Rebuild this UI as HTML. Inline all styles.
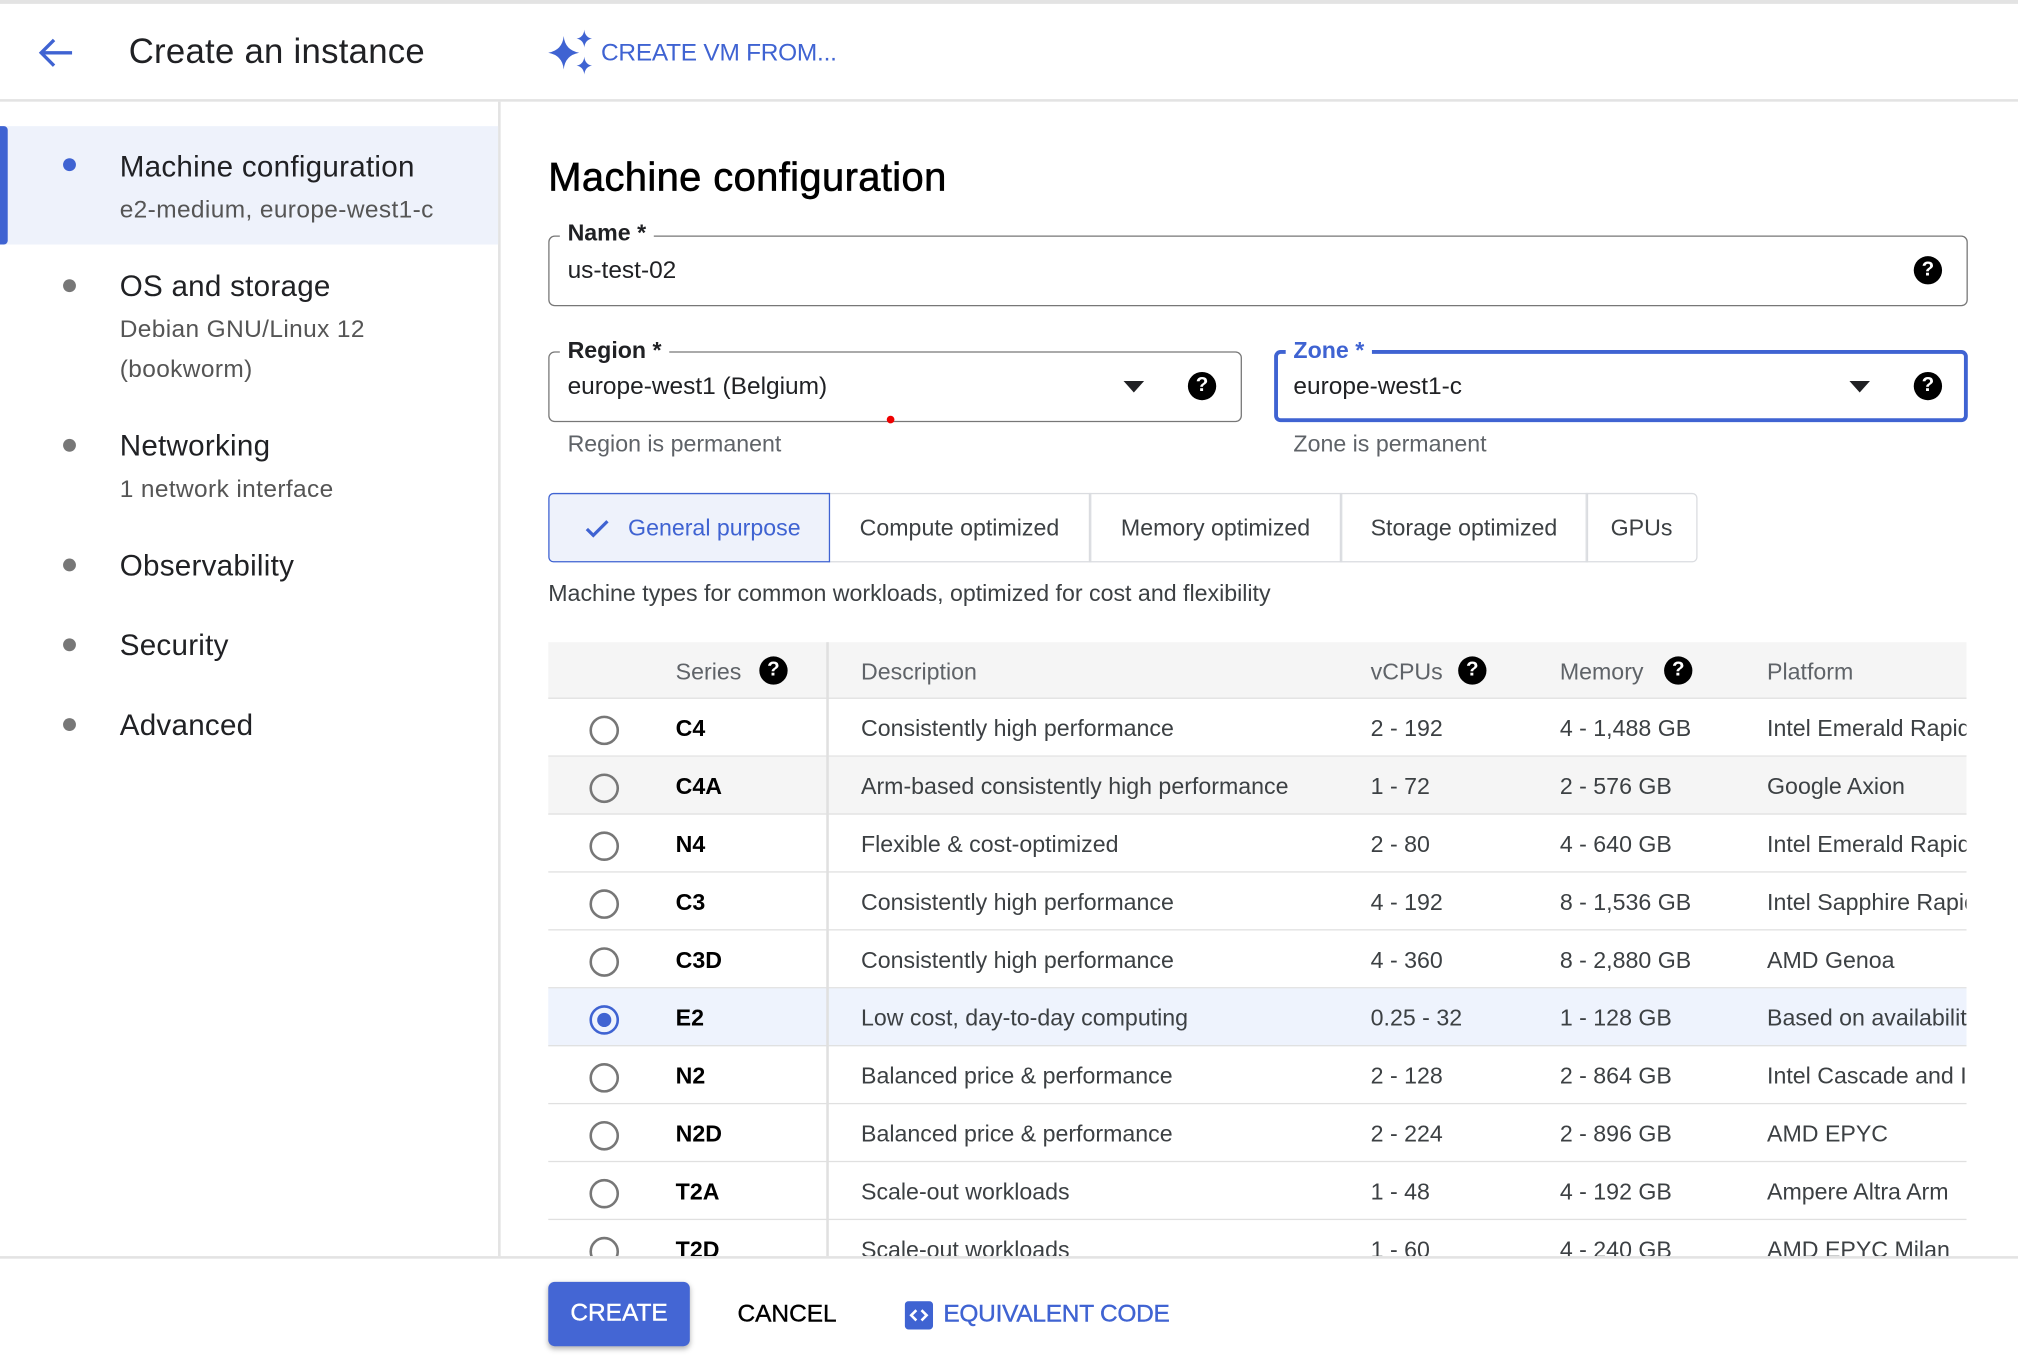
<!DOCTYPE html>
<html><head><meta charset="utf-8"><style>
*{box-sizing:border-box;margin:0;padding:0}
html,body{width:2018px;height:1364px;overflow:hidden;background:#fff}
#w{position:absolute;left:0;top:0;width:1568px;height:1060px;transform:scale(1.28699);transform-origin:0 0;font-family:"Liberation Sans",sans-serif;color:#202124}
.a{position:absolute;white-space:nowrap}
.help{position:absolute;width:22px;height:22px;border-radius:50%;background:#000;color:#fff;font-weight:bold;font-size:16px;text-align:center;line-height:22px}
.tri{position:absolute;width:0;height:0;border-left:8px solid transparent;border-right:8px solid transparent;border-top:9px solid #202124}
.row{position:absolute;left:426px;width:1102px;height:45px;border-bottom:1.5px solid #e0e0e0;font-size:18px;color:#3c4043}
.row .a{top:13px}
.rad{position:absolute;left:458px;width:23px;height:23px;border-radius:50%;border:2.5px solid #777}
.tab{position:absolute;top:383px;height:54px;border:1.5px solid #dadce0;font-size:18px;color:#3c4043;line-height:52px;text-align:center}
</style></head><body><div id="w">
<div class="a" style="left:0;top:0;width:1568px;height:3px;background:#e3e3e3"></div>
<svg class="a" style="left:28px;top:28px" width="30" height="26" viewBox="0 0 30 26"><path d="M28 13H4M14 3L4 13l10 10" stroke="#3f63d2" stroke-width="2.6" fill="none"/></svg>
<div class="a" style="left:100px;top:25px;font-size:27px;color:#202124;letter-spacing:0.2px">Create an instance</div>
<svg class="a" style="left:424px;top:22px" width="40" height="38" viewBox="0 0 40 38"><path d="M14 6Q15 17 26 19Q15 21 14 32Q13 21 2 19Q13 17 14 6Z" fill="#3f63d2"/><path d="M30 1Q30.5 7 36 8Q30.5 9 30 15Q29.5 9 24 8Q29.5 7 30 1Z" fill="#3f63d2"/><path d="M30 22Q30.5 28 36 29Q30.5 30 30 36Q29.5 30 24 29Q29.5 28 30 22Z" fill="#3f63d2"/></svg>
<div class="a" style="left:467px;top:31px;font-size:19px;color:#3f63d2;letter-spacing:-0.2px">CREATE VM FROM...</div>
<div class="a" style="left:0;top:77px;width:1568px;height:2px;background:#e3e3e3"></div>
<div class="a" style="left:387px;top:79px;width:1.5px;height:900px;background:#e3e3e3"></div>
<div class="a" style="left:0;top:98px;width:387px;height:92px;background:#eef2fb"></div>
<div class="a" style="left:0;top:98px;width:6px;height:92px;background:#3f63d2;border-radius:0 3px 3px 0"></div>
<div class="a" style="left:49px;top:123px;width:10px;height:10px;border-radius:50%;background:#3f63d2"></div>
<div class="a" style="left:93px;top:116px;font-size:23px;letter-spacing:0.2px">Machine configuration</div>
<div class="a" style="left:93px;top:153px;font-size:19px;color:#555;letter-spacing:0.3px">e2-medium, europe-west1-c</div>
<div class="a" style="left:49px;top:217px;width:10px;height:10px;border-radius:50%;background:#777"></div>
<div class="a" style="left:93px;top:209px;font-size:23px;letter-spacing:0.2px">OS and storage</div>
<div class="a" style="left:93px;top:241px;font-size:19px;color:#555;line-height:31px;white-space:normal;width:220px;letter-spacing:0.3px">Debian GNU/Linux 12 (bookworm)</div>
<div class="a" style="left:49px;top:341px;width:10px;height:10px;border-radius:50%;background:#777"></div>
<div class="a" style="left:93px;top:333px;font-size:23px;letter-spacing:0.2px">Networking</div>
<div class="a" style="left:93px;top:370px;font-size:19px;color:#555;letter-spacing:0.3px">1 network interface</div>
<div class="a" style="left:49px;top:434px;width:10px;height:10px;border-radius:50%;background:#777"></div>
<div class="a" style="left:93px;top:426px;font-size:23px;letter-spacing:0.2px">Observability</div>
<div class="a" style="left:49px;top:496px;width:10px;height:10px;border-radius:50%;background:#777"></div>
<div class="a" style="left:93px;top:488px;font-size:23px;letter-spacing:0.2px">Security</div>
<div class="a" style="left:49px;top:558px;width:10px;height:10px;border-radius:50%;background:#777"></div>
<div class="a" style="left:93px;top:550px;font-size:23px;letter-spacing:0.2px">Advanced</div>

<div class="a" style="left:426px;top:120px;font-size:31px;color:#000;letter-spacing:0.3px;-webkit-text-stroke:0.5px #000">Machine configuration</div>
<div class="a" style="left:426px;top:183px;width:1103px;height:55px;border:1.5px solid #777;border-radius:5px"></div>
<div class="a" style="left:435px;top:171px;background:#fff;padding:0 6px;font-size:18px;font-weight:bold">Name *</div>
<div class="a" style="left:441px;top:200px;font-size:19px">us-test-02</div>
<div class="help" style="left:1487px;top:199px">?</div>
<div class="a" style="left:426px;top:273px;width:539px;height:55px;border:1.5px solid #777;border-radius:5px"></div>
<div class="a" style="left:435px;top:262px;background:#fff;padding:0 6px;font-size:18px;font-weight:bold">Region *</div>
<div class="a" style="left:441px;top:290px;font-size:19px">europe-west1 (Belgium)</div>
<div class="tri" style="left:873px;top:296px"></div>
<div class="help" style="left:923px;top:289px">?</div>
<div class="a" style="left:689px;top:323px;width:6px;height:6px;border-radius:50%;background:#e00"></div>
<div class="a" style="left:441px;top:335px;font-size:18px;color:#5f6368">Region is permanent</div>
<div class="a" style="left:990px;top:272px;width:539px;height:56px;border:3px solid #3f63d2;border-radius:5px"></div>
<div class="a" style="left:999px;top:262px;background:#fff;padding:0 6px;font-size:18px;font-weight:bold;color:#3f63d2">Zone *</div>
<div class="a" style="left:1005px;top:290px;font-size:19px">europe-west1-c</div>
<div class="tri" style="left:1437px;top:296px"></div>
<div class="help" style="left:1487px;top:289px">?</div>
<div class="a" style="left:1005px;top:335px;font-size:18px;color:#5f6368">Zone is permanent</div>

<div class="tab" style="left:643px;width:205px">Compute optimized</div>
<div class="tab" style="left:846px;width:197px">Memory optimized</div>
<div class="tab" style="left:1041px;width:193px">Storage optimized</div>
<div class="tab" style="left:1232px;width:87px;border-radius:0 4px 4px 0">GPUs</div>
<div class="tab" style="left:426px;width:219px;border:1.5px solid #3f63d2;background:#eef2fb;color:#3f63d2;border-radius:4px 0 0 4px;padding-left:61px;text-align:left">General purpose</div>
<svg class="a" style="left:454px;top:402px" width="20" height="18" viewBox="0 0 20 18"><path d="M2 9l5 5L18 3" stroke="#3f63d2" stroke-width="2.5" fill="none"/></svg>
<div class="a" style="left:426px;top:451px;font-size:18px;color:#3c4043">Machine types for common workloads, optimized for cost and flexibility</div>

<div class="row" style="top:499px;height:44px;background:#f5f5f5;color:#5f6368">
<div class="a" style="left:99px">Series</div><div class="help" style="left:164px;top:11px">?</div>
<div class="a" style="left:243px">Description</div>
<div class="a" style="left:639px">vCPUs</div><div class="help" style="left:707px;top:11px">?</div>
<div class="a" style="left:786px">Memory</div><div class="help" style="left:867px;top:11px">?</div>
<div class="a" style="left:947px">Platform</div></div>
<div class="a" style="left:642px;top:499px;width:1.5px;height:480px;background:#e0e0e0;z-index:2"></div>

<div class="row" style="top:543px"><div class="a" style="left:99px;color:#000;font-weight:bold">C4</div><div class="a" style="left:243px">Consistently high performance</div><div class="a" style="left:639px">2 - 192</div><div class="a" style="left:786px">4 - 1,488 GB</div><div class="a" style="left:947px;width:155px;overflow:hidden">Intel Emerald Rapids</div></div>
<div class="row" style="top:588px;background:#f5f5f5"><div class="a" style="left:99px;color:#000;font-weight:bold">C4A</div><div class="a" style="left:243px">Arm-based consistently high performance</div><div class="a" style="left:639px">1 - 72</div><div class="a" style="left:786px">2 - 576 GB</div><div class="a" style="left:947px">Google Axion</div></div>
<div class="row" style="top:633px"><div class="a" style="left:99px;color:#000;font-weight:bold">N4</div><div class="a" style="left:243px">Flexible &amp; cost-optimized</div><div class="a" style="left:639px">2 - 80</div><div class="a" style="left:786px">4 - 640 GB</div><div class="a" style="left:947px;width:155px;overflow:hidden">Intel Emerald Rapids</div></div>
<div class="row" style="top:678px"><div class="a" style="left:99px;color:#000;font-weight:bold">C3</div><div class="a" style="left:243px">Consistently high performance</div><div class="a" style="left:639px">4 - 192</div><div class="a" style="left:786px">8 - 1,536 GB</div><div class="a" style="left:947px;width:155px;overflow:hidden">Intel Sapphire Rapids</div></div>
<div class="row" style="top:723px"><div class="a" style="left:99px;color:#000;font-weight:bold">C3D</div><div class="a" style="left:243px">Consistently high performance</div><div class="a" style="left:639px">4 - 360</div><div class="a" style="left:786px">8 - 2,880 GB</div><div class="a" style="left:947px">AMD Genoa</div></div>
<div class="row" style="top:768px;background:#eef3fd"><div class="a" style="left:99px;color:#000;font-weight:bold">E2</div><div class="a" style="left:243px">Low cost, day-to-day computing</div><div class="a" style="left:639px">0.25 - 32</div><div class="a" style="left:786px">1 - 128 GB</div><div class="a" style="left:947px;width:155px;overflow:hidden">Based on availability</div></div>
<div class="row" style="top:813px"><div class="a" style="left:99px;color:#000;font-weight:bold">N2</div><div class="a" style="left:243px">Balanced price &amp; performance</div><div class="a" style="left:639px">2 - 128</div><div class="a" style="left:786px">2 - 864 GB</div><div class="a" style="left:947px;width:155px;overflow:hidden">Intel Cascade and Ice Lake</div></div>
<div class="row" style="top:858px"><div class="a" style="left:99px;color:#000;font-weight:bold">N2D</div><div class="a" style="left:243px">Balanced price &amp; performance</div><div class="a" style="left:639px">2 - 224</div><div class="a" style="left:786px">2 - 896 GB</div><div class="a" style="left:947px">AMD EPYC</div></div>
<div class="row" style="top:903px"><div class="a" style="left:99px;color:#000;font-weight:bold">T2A</div><div class="a" style="left:243px">Scale-out workloads</div><div class="a" style="left:639px">1 - 48</div><div class="a" style="left:786px">4 - 192 GB</div><div class="a" style="left:947px">Ampere Altra Arm</div></div>
<div class="row" style="top:948px"><div class="a" style="left:99px;color:#000;font-weight:bold">T2D</div><div class="a" style="left:243px">Scale-out workloads</div><div class="a" style="left:639px">1 - 60</div><div class="a" style="left:786px">4 - 240 GB</div><div class="a" style="left:947px">AMD EPYC Milan</div></div>
<div class="rad" style="top:556px"></div><div class="rad" style="top:601px"></div><div class="rad" style="top:646px"></div><div class="rad" style="top:691px"></div><div class="rad" style="top:736px"></div>
<div class="rad" style="top:781px;border-color:#3f63d2"><div style="position:absolute;left:3.5px;top:3.5px;width:11px;height:11px;border-radius:50%;background:#3f63d2"></div></div>
<div class="rad" style="top:826px"></div><div class="rad" style="top:871px"></div><div class="rad" style="top:916px"></div><div class="rad" style="top:961px"></div>

<div class="a" style="left:0;top:976px;width:1568px;height:84px;background:#fff;border-top:2px solid #e3e3e3;z-index:3">
<div class="a" style="left:426px;top:18px;width:110px;height:50px;background:#4466d4;border-radius:5px;box-shadow:0 2px 4px rgba(0,0,0,.3);color:#fff;font-size:19px;text-align:center;line-height:50px;-webkit-text-stroke:0.3px #fff">CREATE</div>
<div class="a" style="left:573px;top:33px;font-size:19px;color:#000;-webkit-text-stroke:0.3px #000">CANCEL</div>
<svg class="a" style="left:703px;top:33px" width="22" height="22" viewBox="0 0 22 22"><rect width="22" height="22" rx="3" fill="#3f63d2"/><path d="M9 7l-4 4 4 4M13 7l4 4-4 4" stroke="#fff" stroke-width="2" fill="none"/></svg>
<div class="a" style="left:733px;top:33px;font-size:19px;color:#3f63d2;-webkit-text-stroke:0.3px #3f63d2;letter-spacing:-0.2px">EQUIVALENT CODE</div>
</div>
</div></body></html>
